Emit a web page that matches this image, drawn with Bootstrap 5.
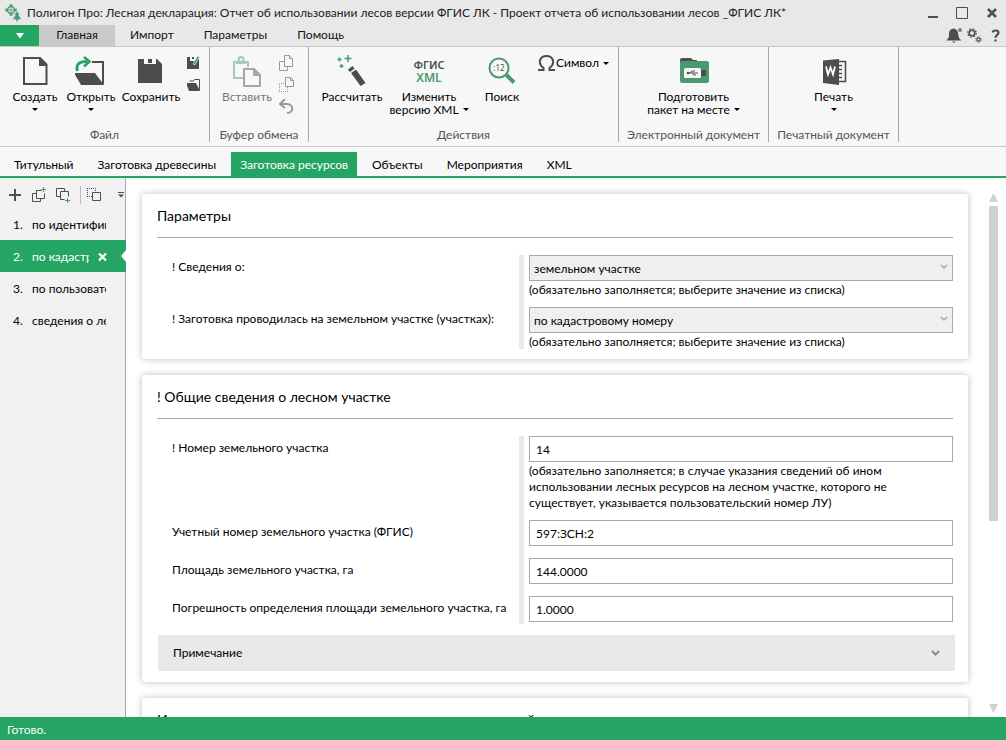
<!DOCTYPE html>
<html lang="ru">
<head>
<meta charset="utf-8">
<meta name="viewport" content="width=device-width, initial-scale=1">
<title>Полигон Про: Лесная декларация</title>
<link href="https://cdn.jsdelivr.net/npm/bootstrap@5.3.0/dist/css/bootstrap.min.css" rel="stylesheet">
<style>
:root { --green: #24a564; --line: #a8a9ad; }
body { font-family: Lato, "Noto Sans", sans-serif; font-size: 12px; line-height: 16px; color: #000; background: #fff; }
button { font: inherit; color: inherit; background: none; border: 0; padding: 0; }
svg { display: block; flex: none; }
.titlebar { height: 25px; background: #e8e8e8; padding: 0 8px 0 4px; color: #222; }
.win-btns { gap: 16px; }
.menubar { height: 22px; background: #e8e8e8; border-bottom: 1px solid #c8c8c8; padding-right: 5px; }
.file-btn { width: 39px; background: var(--green); }
.menu-tab { padding: 0 15px; color: #111; text-decoration: none; line-height: 20px; }
.menu-tab.active { background: #cacaca; width: 76px; padding: 0; text-align: center; }
.ribbon { height: 100px; background: #f7f7f7; border-bottom: 1px solid #c8c8c8; padding-bottom: 4px; }
.group { border-right: 1px solid var(--line); padding-top: 8px; }
.group-name { color: #555; text-align: center; margin-bottom: 0; line-height: 14px; }
.big { display: flex; flex-direction: column; align-items: center; line-height: 13px; white-space: nowrap; }
.big .caption { margin-top: 3px; }
.tri { display: inline-block; border: 3px solid transparent; border-top-color: #000; border-bottom: 0; }
.big > .tri { margin-top: 5px; }
.inline-tri { vertical-align: 3px; margin-left: 4px; }
.off { color: #777; }
.g-file { width: 210px; padding-left: 7px; } .g-clip { width: 99px; padding-left: 9px; }
.g-file .group-name { margin-left: -7px; } .g-clip .group-name { margin-left: -9px; } .g-act .group-name { margin-left: -7px; }
.g-act { width: 310px; padding-left: 7px; } .g-usb { width: 150px; } .g-print { width: 130px; }
.w-a { width: 56px; } .w-b { width: 64px; } .w-c { width: 72px; } .w-d { width: 82px; }
.doc-tabs { height: 31px; background: #f7f7f7; border-bottom: 2px solid var(--green); padding: 5px 0 0 5px; }
.doc-tab { padding: 0 9px; margin-right: 6px; line-height: 26px; height: 24px; color: #000; text-decoration: none; white-space: nowrap; }
.doc-tab.active { background: var(--green); color: #fff; }
.side { width: 126px; background: #f1f1f1; border-right: 1px solid var(--line); }
.side-tools { height: 30px; padding: 4px 0 0 8px; gap: 6px; }
.side-row { height: 32px; padding: 2px 0 0 13px; color: #000; text-decoration: none; position: relative; width: 126px; }
.side-row .num { width: 19px; flex: none; }
.side-row .txt { width: 74px; overflow: hidden; white-space: nowrap; }
.side-row.active { background: var(--green); color: #fff; }
.side-row.active .txt { width: 57px; }
.notch { position: absolute; right: 0; top: 10px; border: 6px solid transparent; border-right: 5px solid #fff; border-left: 0; }
.workspace { min-height: 0; }
.sheets { padding: 16px 8px 0 16px; min-width: 0; overflow: hidden; gap: 16px; }
.sheet { border-radius: 3px; box-shadow: 0 0 7px rgba(0,0,0,.27); padding: 12px 15px 10px; background: #fff; flex: none; }
.sheet h2 { font-size: 14px; line-height: 20px; margin: 0; padding-bottom: 11px; border-bottom: 1px solid var(--line); font-weight: 400; white-space: nowrap; }
.fields { margin-top: 17px; padding-left: 15px; position: relative; display: flex; flex-direction: column; gap: 10px; }
.field-row { display: grid; grid-template-columns: 347px 1fr; column-gap: 10px; min-height: 28px; }
.field-row label { padding-top: 4px; }
.fields::before { content: ""; position: absolute; left: 362px; top: 0; bottom: 0; width: 5px; background: #e9e9e9; }
.field-row .form-control, .field-row .form-select { display: block; height: 26px; border: 1px solid var(--line); border-radius: 0; font-size: 12px; line-height: 16px; color: #000; padding: 4px 6px; }
.field-row .form-select { background-color: #efefef; padding: 5px 4px 3px; background-image: url("data:image/svg+xml,%3csvg xmlns='http://www.w3.org/2000/svg' viewBox='0 0 8 8'%3e%3cpath fill='none' stroke='%23a8a9ad' stroke-width='1.5' d='M1 2l3 3 3-3'/%3e%3c/svg%3e"); background-size: 8px; background-position: right 4px top 7px; }
.hint { padding-top: 1px; margin-bottom: -1px; max-width: 375px; }
.note { height: 36px; margin: 11px 0 1px 1px; padding: 0 15px; background: #e9e9e9; width: calc(100% + 1px); }
.scroll { width: 30px; padding: 15px 8px 4px 0; }
.thumb { width: 9px; height: 315px; background: #d2d2d2; margin-top: 4px; }
.status { height: 23px; background: var(--green); color: #fff; padding: 2px 7px 0; }
</style>
</head>
<body>
<div class="vh-100 d-flex flex-column overflow-hidden">
<header class="flex-shrink-0">
  <div class="titlebar d-flex align-items-center">
    <svg width="19" height="20" viewBox="0 0 19 20" fill="none" stroke="#4a9a70"><circle cx="7" cy="7" r="3.500" stroke-width="1.500"/><path d="M7 1v12M1 7h12" stroke-width=".8"/><path d="M5 1.500h4L7 4zM5 12.500h4L7 10zM1.500 5v4L4 7zM12.500 5v4L10 7z" fill="#4a9a70" stroke="none"/><path d="M13 8l3 4h-1.500l3 4.500H14v2h-2v-2H8.500l3-4.500H10z" fill="#4a9a70" stroke="#e8e8e8" stroke-width=".5"/></svg>
    <span class="ms-1 text-truncate flex-grow-1">Полигон Про: Лесная декларация: Отчет об использовании лесов версии ФГИС ЛК - Проект отчета об использовании лесов _ФГИС ЛК*</span>
    <div class="win-btns d-flex">
      <button aria-label="Свернуть"><svg width="12" height="12" viewBox="0 0 12 12"><path d="M0 10h10" stroke="#4d4d4d" stroke-width="2"/></svg></button>
      <button aria-label="Развернуть"><svg width="14" height="12" viewBox="0 0 14 12"><path d="M.5.500h11v11H.5z" fill="none" stroke="#4d4d4d"/></svg></button>
      <button aria-label="Закрыть"><svg width="12" height="12" viewBox="0 0 12 12"><path d="M2 2l8 8M10 2l-8 8" stroke="#4d4d4d" stroke-width="2.500"/></svg></button>
    </div>
  </div>
  <nav class="menubar d-flex">
    <button class="file-btn d-flex align-items-center justify-content-center" aria-label="Меню"><svg width="8" height="6" viewBox="0 0 8 6"><path d="M0 0h8L4 5.500z" fill="#fff"/></svg></button>
    <a href="#" class="menu-tab active">Главная</a>
    <a href="#" class="menu-tab">Импорт</a>
    <a href="#" class="menu-tab">Параметры</a>
    <a href="#" class="menu-tab">Помощь</a>
    <div class="ms-auto d-flex align-items-center gap-1">
      <button aria-label="Уведомления"><svg width="17" height="17" viewBox="0 0 17 17"><path d="M7.500 1.500c4.500 1 4.500 4 5 7 0 2 1 3.500 3 5H0c2-1.500 3-3 3-5 0-3 0-6 4.500-7zM6 14.500h3.500L8 16z" fill="#4d4d4d"/><circle cx="14" cy="3" r="2" fill="#4a9a70"/></svg></button>
      <button aria-label="Настройки"><svg width="15" height="15" viewBox="0 0 15 15" fill="none" stroke="#4d4d4d"><circle cx="5" cy="5" r="2.800" stroke-width="1.600"/><circle cx="5" cy="5" r="4.200" stroke-width="1.300" stroke-dasharray="1.600 1.700"/><circle cx="11.500" cy="11.500" r="1.700" stroke-width="1.200"/><circle cx="11.500" cy="11.500" r="2.700" stroke-width="1" stroke-dasharray="1 1.120"/></svg></button>
      <button class="ms-1" aria-label="Справка"><svg width="11" height="13" viewBox="0 0 11 13"><path d="M2.500 3.500C3 .8 8.500.8 8.500 3.700 8.500 6 5.500 5.800 5.500 8.700M5.500 10.500v2" fill="none" stroke="#4d4d4d" stroke-width="2.200"/></svg></button>
    </div>
  </nav>
  <div class="ribbon d-flex">
    <section class="group g-file d-flex flex-column justify-content-between">
      <div class="d-flex">
        <button class="big w-a"><svg width="32" height="32" viewBox="0 0 32 32"><path d="M5 3h16l6.500 6.500V29H5z" fill="none" stroke="#4d4d4d" stroke-width="2"/><path d="M20 2l8.500 9H20z" fill="#4d4d4d"/></svg><span class="caption">Создать</span><span class="tri"></span></button>
        <button class="big w-a"><svg width="32" height="32" viewBox="0 0 32 32"><path d="M17 7h11v22" fill="none" stroke="#4d4d4d" stroke-width="2"/><path d="M-1 18h21l9 12H6z" fill="#4d4d4d"/><path d="M2.500 16C0 8 6 6.500 12 6.500" fill="none" stroke="#24a564" stroke-width="3"/><path d="M9 2l5.500 4.500L9 11.500" fill="none" stroke="#24a564" stroke-width="2.500"/></svg><span class="caption">Открыть</span><span class="tri"></span></button>
        <button class="big w-b"><svg width="32" height="32" viewBox="0 0 32 32"><path d="M3 4h6v9h12V4h1l5 5v19H3z" fill="#4d4d4d"/><path d="M8 9h13v5H8z" fill="#4d4d4d"/><path d="M13 4h4v4h-4z" fill="#4d4d4d"/></svg><span class="caption">Сохранить</span></button>
        <div class="d-flex flex-column gap-2 ms-1">
          <button aria-label="Сохранить как"><svg width="16" height="15" viewBox="0 0 16 15"><path d="M0 2h3v4h7V2l2 2v10H0z" fill="#4d4d4d"/><path d="M5 2h2v2H5z" fill="#4d4d4d"/><path d="M6 9l4.500-8 2 1L8 10z" fill="#4a9a70" stroke="#f7f7f7" stroke-width=".6"/></svg></button>
          <button aria-label="Закрыть файл"><svg width="16" height="14" viewBox="0 0 16 14"><path d="M2.500 3h4l1-1.500h5V12" fill="none" stroke="#4d4d4d"/><path d="M-1 5H9l4 8H2z" fill="#4d4d4d"/></svg></button>
        </div>
      </div>
      <p class="group-name">Файл</p>
    </section>
    <section class="group g-clip d-flex flex-column justify-content-between">
      <div class="d-flex">
        <button class="big w-a off"><svg width="32" height="32" viewBox="0 0 32 32" fill="none"><path d="M13 23H3V7h14v5" stroke="#a3cab7" stroke-width="2"/><circle cx="10" cy="4.500" r="2.500" stroke="#a3cab7" stroke-width="2"/><path d="M5 6h10v3H5z" fill="#a3cab7"/><path d="M13 14h10l6 6v11H13z" stroke="#a6a6a6" stroke-width="2" fill="#f7f7f7"/><path d="M22 13v8h8z" fill="#a6a6a6"/></svg><span class="caption">Вставить</span></button>
        <div class="d-flex flex-column gap-1 ms-1 off">
          <button aria-label="Копировать"><svg width="16" height="18" viewBox="0 0 16 18" fill="#f7f7f7" stroke="#999"><path d="M.5 6.500h8v9h-8z"/><path d="M5.500.5h5l3 3v8h-8z"/><path d="M10.500.5v3h3"/></svg></button>
          <button aria-label="Вырезать"><svg width="16" height="18" viewBox="0 0 16 18" fill="none" stroke="#999"><path d="M0 6.500h9M0 14.500h9M.5 6v9M8.500 6v9" stroke-dasharray="1 1"/><path d="M6.500.5h5l3 3v6h-8z" fill="#f7f7f7"/><path d="M11.500.5v3h3"/></svg></button>
          <button aria-label="Отменить"><svg width="16" height="16" viewBox="0 0 16 16" fill="none" stroke="#999" stroke-width="2"><path d="M1 5h7c7 0 7 9 0 9"/><path d="M6 0L1 5l5 4"/></svg></button>
        </div>
      </div>
      <p class="group-name">Буфер обмена</p>
    </section>
    <section class="group g-act d-flex flex-column justify-content-between">
      <div class="d-flex align-items-start">
        <button class="big w-c"><svg width="32" height="32" viewBox="0 0 32 32"><path d="M12 14.500l4.500-3.500 2 2.500-4.500 3.500zM15 18l5-3.500L29.500 28l-5 3z" fill="#4d4d4d"/><path d="M12 0v7M8.500 3.500h7M3.500 2.500v4M1.500 4.500h4M5.500 9v4M3.500 11h4" stroke="#4a9a70" stroke-width="1.500"/></svg><span class="caption">Рассчитать</span></button>
        <button class="big w-d"><svg width="32" height="32" viewBox="0 0 32 32" font-family="Noto Sans, sans-serif" text-anchor="middle"><text x="16" y="14" font-size="11" font-weight="600" fill="#4d4d4d">ФГИС</text><text x="16" y="27" font-size="12" font-weight="600" fill="#4a9a70">XML</text></svg><span class="caption">Изменить<br>версию XML<span class="tri inline-tri"></span></span></button>
        <button class="big w-b"><svg width="32" height="32" viewBox="0 0 32 32" fill="none"><circle cx="13" cy="13" r="9.500" stroke="#4a9a70" stroke-width="2"/><path d="M20 19.500l8 8" stroke="#4a9a70" stroke-width="4"/><text x="13" y="16" font-size="8" text-anchor="middle" fill="#4d4d4d" font-family="Noto Sans, sans-serif">:12</text></svg><span class="caption">Поиск</span></button>
        <button class="d-flex align-items-center ms-1 text-nowrap"><svg width="18" height="16" viewBox="0 0 18 16"><path d="M0 15h5.500v-2C-1 8 2 1 8.500 1s9.500 7 3 12v2H17" fill="none" stroke="#4d4d4d" stroke-width="2"/></svg>Символ<span class="tri ms-1"></span></button>
      </div>
      <p class="group-name">Действия</p>
    </section>
    <section class="group g-usb d-flex flex-column justify-content-between">
      <button class="big"><svg width="32" height="32" viewBox="0 0 32 32"><path d="M2 12V5q0-2 2-2h8q2 0 3 2h4v8z" fill="#4d4d4d"/><rect x="2" y="6" width="29" height="22" rx="2" fill="#4a9a70"/><rect x="6" y="13" width="17" height="10" rx="1.500" fill="#f7f7f7"/><path d="M23 15h5v6h-5z" fill="#4d4d4d"/><path d="M9 18h11M12 18l2-2h3M14 18l2 2h2" stroke="#4d4d4d" fill="none"/><circle cx="10" cy="18" r="1.300" fill="#4d4d4d"/></svg><span class="caption">Подготовить<br>пакет на месте<span class="tri inline-tri"></span></span></button>
      <p class="group-name">Электронный документ</p>
    </section>
    <section class="group g-print d-flex flex-column justify-content-between">
      <button class="big"><svg width="32" height="32" viewBox="0 0 32 32"><path d="M20 6.500h7.500v20H20M20 10.500h4M20 14.500h4M20 18.500h4M20 22.500h4" fill="none" stroke="#4d4d4d" stroke-width="1.600"/><path d="M5 5.500L21 4v26L5 28z" fill="#4d4d4d"/><path d="M8 11.500l2 8 2.500-7 2.500 7 2-8" fill="none" stroke="#fff" stroke-width="1.800"/></svg><span class="caption">Печать</span><span class="tri"></span></button>
      <p class="group-name">Печатный документ</p>
    </section>
  </div>
  <nav class="doc-tabs d-flex">
    <a href="#" class="doc-tab">Титульный</a>
    <a href="#" class="doc-tab">Заготовка древесины</a>
    <a href="#" class="doc-tab active">Заготовка ресурсов</a>
    <a href="#" class="doc-tab">Объекты</a>
    <a href="#" class="doc-tab">Мероприятия</a>
    <a href="#" class="doc-tab">XML</a>
  </nav>
</header>
<div class="workspace d-flex flex-grow-1">
  <aside class="side flex-shrink-0">
    <div class="side-tools d-flex align-items-center">
      <button aria-label="Добавить"><svg width="14" height="16" viewBox="0 0 14 16"><path d="M1 8h12M7 2v12" stroke="#4d4d4d" stroke-width="2"/></svg></button>
      <button class="ms-1" aria-label="Добавить выше"><svg width="14" height="16" viewBox="0 0 14 16" fill="none" stroke="#4d4d4d"><path d="M4.500 6.500h-4v8h8v-3M9.500 3.500h-5v8h8v-5"/><path d="M11.500 0v5M9 2.500h5" stroke="#4a9a70"/></svg></button>
      <button class="ms-1" aria-label="Добавить ниже"><svg width="14" height="16" viewBox="0 0 14 16" fill="none" stroke="#4d4d4d"><path d="M4.500 9.500h-4v-8h8v3M8.500 12.500h-4v-8h8v5"/><path d="M11.500 11v5M9 13.500h5" stroke="#4a9a70"/></svg></button>
      <svg class="ms-1" width="1" height="18"><path d="M.5 0v18" stroke="#b8bcc4"/></svg>
      <button aria-label="Выделить"><svg width="15" height="16" viewBox="0 0 15 16" fill="none" stroke="#4d4d4d"><path d="M0 1.500h9M0 9.500h5M.5 1v9M8.500 1v4" stroke-dasharray="1 1"/><path d="M5.500 5.500h8v8h-8z" fill="#f1f1f1"/></svg></button>
      <button class="ms-auto" aria-label="Ещё"><svg width="8" height="8" viewBox="0 0 8 8"><path d="M1 1.500h6" stroke="#4d4d4d"/><path d="M1 3.500h6l-3 3z" fill="#4d4d4d"/></svg></button>
    </div>
    <a href="#" class="side-row d-flex align-items-center"><span class="num">1.</span><span class="txt">по идентификатору</span></a>
    <a href="#" class="side-row d-flex align-items-center active"><span class="num">2.</span><span class="txt">по кадастровому</span><svg class="ms-2" width="11" height="10" viewBox="0 0 11 10"><path d="M2 1.500l7 7M9 1.500l-7 7" stroke="#fff" stroke-width="2.200"/></svg><span class="notch"></span></a>
    <a href="#" class="side-row d-flex align-items-center"><span class="num">3.</span><span class="txt">по пользовательскому</span></a>
    <a href="#" class="side-row d-flex align-items-center"><span class="num">4.</span><span class="txt">сведения о лесном</span></a>
  </aside>
  <main class="sheets flex-grow-1 d-flex flex-column">
    <section class="sheet">
      <h2>Параметры</h2>
      <div class="fields">
        <div class="field-row"><label for="about">! Сведения о:</label><div><select id="about" class="form-select"><option>земельном участке</option></select><div class="hint">(обязательно заполняется; выберите значение из списка)</div></div></div>
        <div class="field-row"><label for="where">! Заготовка проводилась на земельном участке (участках):</label><div><select id="where" class="form-select"><option>по кадастровому номеру</option></select><div class="hint">(обязательно заполняется; выберите значение из списка)</div></div></div>
      </div>
    </section>
    <section class="sheet">
      <h2>! Общие сведения о лесном участке</h2>
      <div class="fields">
        <div class="field-row"><label for="num">! Номер земельного участка</label><div><input id="num" class="form-control" value="14"><div class="hint">(обязательно заполняется; в случае указания сведений об ином использовании лесных ресурсов на лесном участке, которого не существует, указывается пользовательский номер ЛУ)</div></div></div>
        <div class="field-row"><label for="acc">Учетный номер земельного участка (ФГИС)</label><div><input id="acc" class="form-control" value="597:ЗСН:2"></div></div>
        <div class="field-row"><label for="area">Площадь земельного участка, га</label><div><input id="area" class="form-control" value="144.0000"></div></div>
        <div class="field-row"><label for="err">Погрешность определения площади земельного участка, га</label><div><input id="err" class="form-control" value="1.0000"></div></div>
      </div>
      <button class="note d-flex align-items-center justify-content-between">Примечание<svg width="9" height="8" viewBox="0 0 9 8"><path d="M1 2l3.500 3.500L8 2" fill="none" stroke="#8a8a8a" stroke-width="2"/></svg></button>
    </section>
    <section class="sheet"><h2>Используемые участки, расположенные на землях лесной зоны</h2></section>
  </main>
  <div class="scroll d-flex flex-column align-items-end flex-shrink-0">
    <svg width="9" height="9" viewBox="0 0 9 9"><path d="M4.500 0L9 9H0z" fill="#d2d2d2"/></svg>
    <div class="thumb"></div>
    <svg class="mt-auto" width="9" height="9" viewBox="0 0 9 9"><path d="M0 0h9L4.500 9z" fill="#d2d2d2"/></svg>
  </div>
</div>
<footer class="status d-flex align-items-center flex-shrink-0">Готово.</footer>
</div>
<script src="https://cdn.jsdelivr.net/npm/bootstrap@5.3.0/dist/js/bootstrap.bundle.min.js"></script>
</body>
</html>
